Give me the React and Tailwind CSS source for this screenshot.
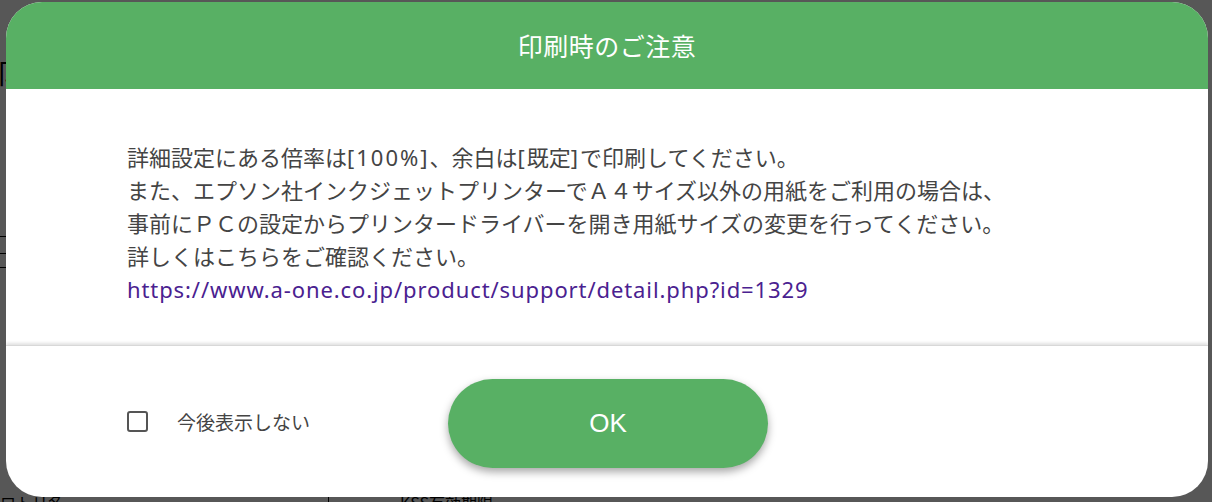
export default function App() {
  const jp = { fontFamily: '"Noto Sans CJK JP", "Noto Sans", sans-serif' };
  const body = { fontFamily: '"Noto Sans", "Noto Sans CJK JP", sans-serif' };
  return (
    <div className="relative w-[1212px] h-[502px] overflow-hidden bg-[#575757]" style={jp}>
      {/* dimmed page behind */}
      <div className="absolute left-[-14px] top-[58px] text-[28px] text-black leading-none">印</div>
      <div className="absolute left-0 top-[236px] w-[6px] h-[18px] border-y border-black"></div>
      <div className="absolute left-0 top-[254px] w-[6px] h-[14px] border-b border-black"></div>
      <div className="absolute left-[328px] top-[480px] w-px h-[22px] bg-black"></div>
      <div className="absolute left-0 top-[494px] text-[16px] text-black leading-none">ロトリ名</div>
      <div className="absolute left-[400px] top-[494px] text-[16px] text-black leading-none">KSS有効期限</div>

      {/* modal */}
      <div className="absolute left-[6px] top-[2px] w-[1202px] h-[495px] bg-white rounded-[36px] overflow-hidden flex flex-col">
        <div className="h-[87px] shrink-0 bg-[#58b064] flex items-center justify-center">
          <h1 className="text-white text-[25px] leading-none tracking-[0.5px]">印刷時のご注意</h1>
        </div>
        <div className="flex-1 pl-[121px] pt-[52px] text-[22px] leading-[33px] text-[#444]" style={body}>
          <p>
            詳細設定にある倍率は<span className="tracking-[2px]">[100%]</span>、余白は
            <span className="tracking-[2px]">[</span>既定<span className="tracking-[2px]">]</span>で印刷してください。
          </p>
          <p>また、エプソン社インクジェットプリンターでＡ４サイズ以外の用紙をご利用の場合は、</p>
          <p>事前にＰＣの設定からプリンタードライバーを開き用紙サイズの変更を行ってください。</p>
          <p>詳しくはこちらをご確認ください。</p>
          <a href="#" className="text-[#4a2190] tracking-[0.9px]" style={{ fontFamily: '"Noto Sans", Arial, sans-serif' }}>
            https://www.a-one.co.jp/product/support/detail.php?id=1329
          </a>
        </div>
        <div className="h-[152px] shrink-0 border-t border-[#d8d8d8] shadow-[0_-2px_3px_rgba(0,0,0,0.12)] flex items-center">
          <label className="flex items-center ml-[121px] gap-[29px]">
            <span className="w-[21px] h-[21px] border-2 border-[#555] rounded-[3px] bg-white"></span>
            <span className="text-[19px] text-[#444] leading-none">今後表示しない</span>
          </label>
          <button className="ml-[138px] mt-[3px] w-[320px] h-[89px] rounded-full bg-[#58b064] text-white text-[26px] shadow-[0_4px_8px_rgba(0,0,0,0.35)]" style={{ fontFamily: '"Liberation Sans", Arial, sans-serif' }}>
            OK
          </button>
        </div>
      </div>
    </div>
  );
}
